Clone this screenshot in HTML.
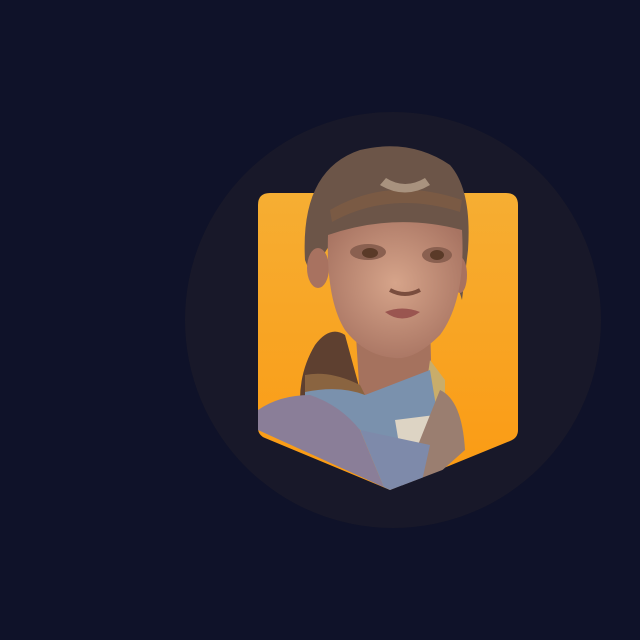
<!DOCTYPE html><html><head><style>html,body{margin:0;padding:0;background:#0f1229;width:640px;height:640px;overflow:hidden}</style></head><body>
<svg width="640" height="640" viewBox="0 0 640 640">
<defs>
<linearGradient id="og" x1="0" y1="0" x2="0" y2="1"><stop offset="0" stop-color="#f6ae33"/><stop offset="1" stop-color="#fb9a12"/></linearGradient>
<clipPath id="up"><path d="M0 0 H640 V420 L518 430 L518 441 L390 490 L258 430 L0 430Z"/></clipPath>
<radialGradient id="sk" cx="0.5" cy="0.45" r="0.6"><stop offset="0" stop-color="#d6a48a"/><stop offset="1" stop-color="#a87462"/></radialGradient>
</defs>
<rect width="640" height="640" fill="#0f1229"/>
<circle cx="393" cy="320" r="208" fill="#181829"/>
<path d="M270 193 H506 Q518 193 518 205 V430 Q518 438 510 441 L390 490 L265 438 Q258 435 258 428 V205 Q258 193 270 193Z" fill="url(#og)"/>
<g clip-path="url(#up)">
<path d="M305 260 Q300 170 360 150 Q410 138 450 165 Q472 190 468 250 L462 300 Q450 260 440 240 L330 245 Q318 260 315 285Z" fill="#6c5548"/>
<path d="M330 210 Q390 175 462 200 L460 212 Q390 190 332 222Z" fill="#7a5a44"/>
<path d="M380 185 Q405 200 430 185 L425 178 Q405 190 386 178Z" fill="#a8927e"/>
<ellipse cx="318" cy="268" rx="11" ry="20" fill="#a87260"/>
<ellipse cx="460" cy="275" rx="7" ry="18" fill="#a87260"/>
<path d="M355 320 L430 320 L432 400 L360 400Z" fill="#a5725e"/>
<path d="M328 235 Q395 212 462 230 Q466 300 440 335 Q415 360 395 358 Q365 356 345 330 Q326 300 328 235Z" fill="url(#sk)"/>
<ellipse cx="368" cy="252" rx="18" ry="8" fill="#8a6050"/>
<ellipse cx="437" cy="255" rx="15" ry="8" fill="#8a6050"/>
<ellipse cx="370" cy="253" rx="8" ry="5" fill="#5a3a28"/>
<ellipse cx="437" cy="255" rx="7" ry="5" fill="#5a3a28"/>
<path d="M390 290 Q405 298 420 290" stroke="#7a4d3e" stroke-width="4" fill="none"/>
<path d="M385 312 Q402 305 420 312 Q402 325 385 312Z" fill="#9a5550"/>
<path d="M315 345 Q330 325 345 335 L360 390 L300 400 Q300 370 315 345Z" fill="#5e4030"/>
<path d="M430 360 L445 380 L445 440 L420 430Z" fill="#c9ad6a"/>
<path d="M305 385 Q340 375 365 395 L430 370 L440 430 Q410 450 380 440 Q340 420 305 400Z" fill="#7a91ad"/>
<path d="M395 420 L435 415 L440 445 L400 450Z" fill="#ddd4c4"/>
<path d="M305 375 Q330 370 360 385 L365 395 Q340 385 305 392Z" fill="#8a6440"/>
<path d="M258 410 Q280 395 310 395 Q340 405 360 430 L385 490 L258 490Z" fill="#8a7e98"/>
<path d="M440 390 Q462 400 465 450 L420 490 L400 490 L420 440Z" fill="#9a7e70"/>
<path d="M360 430 L430 445 L420 490 L385 490Z" fill="#7e8aaa"/>
</g>
</svg>
</body></html>
